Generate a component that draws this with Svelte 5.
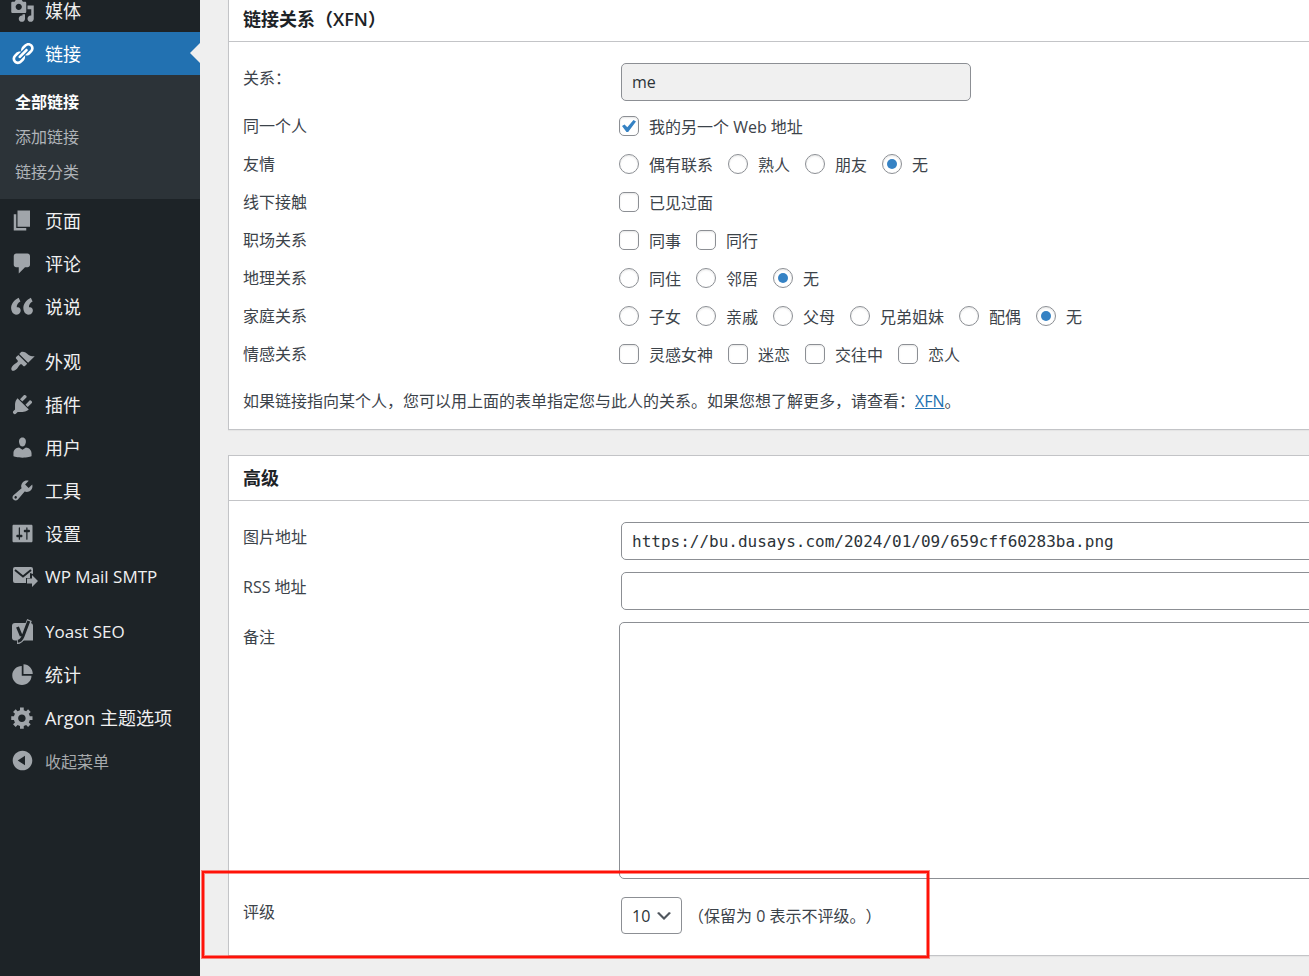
<script lang="ts">
  type MenuItem = { id: string; label: string; icon: string; current?: boolean; gap?: boolean; latin?: boolean };

  const menu: MenuItem[] = [
    { id: 'media', label: '媒体', icon: 'M13 11V4c0-.55-.45-1-1-1h-1.67L9 1H5L3.67 3H2c-.55 0-1 .45-1 1v7c0 .55.45 1 1 1h10c.55 0 1-.45 1-1zM7 4.5c1.38 0 2.5 1.12 2.5 2.5S8.38 9.5 7 9.5 4.5 8.38 4.5 7 5.62 4.5 7 4.5zM14 6h5v10.5c0 1.38-1.12 2.5-2.5 2.5S14 17.88 14 16.5s1.12-2.5 2.5-2.5c.17 0 .34.02.5.05V9h-3V6zm-4 8.05V13h2v3.5c0 1.38-1.12 2.5-2.5 2.5S7 17.88 7 16.5 8.12 14 9.5 14c.17 0 .34.02.5.05z' },
    { id: 'links', label: '链接', current: true, icon: 'M17.74 2.76c1.68 1.69 1.68 4.41 0 6.1l-1.53 1.52c-1.12 1.12-2.7 1.47-4.14 1.09l2.62-2.61.76-.77.76-.76c.84-.84.84-2.2 0-3.04-.84-.85-2.2-.85-3.04 0l-.77.76-3.38 3.38c-.37-1.44-.02-3.02 1.1-4.14l1.52-1.53c1.69-1.68 4.42-1.68 6.1 0zM8.59 13.43l5.34-5.34c.42-.42.42-1.1 0-1.52-.44-.43-1.13-.39-1.53 0l-5.33 5.34c-.42.42-.42 1.1 0 1.52.44.43 1.13.39 1.52 0zm-.76 2.29l4.14-4.15c.38 1.44.03 3.02-1.09 4.14l-1.52 1.53c-1.69 1.68-4.41 1.68-6.1 0-1.68-1.68-1.68-4.42 0-6.1l1.53-1.52c1.12-1.12 2.7-1.47 4.14-1.1l-4.14 4.15c-.85.84-.85 2.2 0 3.05.84.84 2.2.84 3.04 0z' },
    { id: 'pages', label: '页面', icon: 'M6 15V2h10v13H6zm-1 1h8v2H3V5h2v11z' },
    { id: 'comments', label: '评论', icon: 'M5 2h9c1.1 0 2 .9 2 2v7c0 1.1-.9 2-2 2h-2l-5 5v-5H5c-1.1 0-2-.9-2-2V4c0-1.1.9-2 2-2z' },
    { id: 'shuoshuo', label: '说说', icon: 'M8.54 13.22c0-.74-.2-1.38-.61-1.9-.62-.78-1.83-.88-2.53-.72-.29-1.65 1.11-3.75 2.92-4.65L6.93 3C3.2 4.8.5 8.28.96 12.05 1.26 14.43 2.64 16.5 4.99 16.5c.95 0 1.86-.35 2.52-.95s1.03-1.38 1.03-2.33zm9.75 0c0-.74-.2-1.38-.61-1.9-.63-.78-1.83-.88-2.53-.72-.29-1.65 1.11-3.75 2.92-4.65L16.68 3c-3.73 1.8-6.41 5.28-5.95 9.05.29 2.38 1.66 4.45 4.01 4.45.95 0 1.86-.35 2.52-.95s1.03-1.38 1.03-2.33z' },
    { id: 'themes', label: '外观', gap: true, icon: 'M14.48 11.06L7.41 3.99l1.5-1.5c.5-.56 2.3-.47 3.51.32 1.21.8 1.43 1.28 2.91 2.1 1.18.64 2.45 1.26 4.45.85zm-.71.71L6.7 4.7 4.93 6.47c-.39.39-.39 1.02 0 1.41l1.06 1.06c.39.39.39 1.03 0 1.42-.6.6-1.43 1.11-2.21 1.69-.35.26-.7.53-1.01.84C1.43 14.23.4 16.08 1.4 17.07c.99 1 2.84-.03 4.18-1.36.31-.31.58-.66.85-1.02.57-.78 1.08-1.61 1.69-2.21.39-.39 1.02-.39 1.41 0l1.06 1.06c.39.39 1.02.39 1.41 0z' },
    { id: 'plugins', label: '插件', icon: 'M13.11 4.36L9.87 7.6 8 5.73l3.24-3.24c.35-.34 1.05-.2 1.56.32.52.51.66 1.21.31 1.55zm-8 1.77l.91-1.12 9.01 9.01-1.19.84c-.71.71-2.63 1.16-3.82 1.16H6.14L4.9 17.26c-.59.59-1.54.59-2.12 0-.59-.58-.59-1.53 0-2.12l1.24-1.24v-3.88c0-1.13.4-3.19 1.09-3.89zm7.26 3.97l3.24-3.24c.34-.35 1.04-.21 1.55.31.52.51.66 1.21.31 1.55l-3.24 3.25z' },
    { id: 'users', label: '用户', icon: 'M10 9.25c-2.27 0-2.73-3.44-2.73-3.44C7 4.02 7.82 2 9.97 2c2.16 0 2.98 2.02 2.71 3.81 0 0-.41 3.44-2.68 3.44zm0 2.57L12.72 10c2.39 0 4.52 2.33 4.52 4.53v2.49s-3.65 1.13-7.24 1.13c-3.65 0-7.24-1.13-7.24-1.13v-2.49c0-2.25 1.94-4.48 4.47-4.48z' },
    { id: 'tools', label: '工具', icon: 'M16.68 9.77c-1.34 1.34-3.3 1.67-4.95.99l-5.41 6.52c-.99.99-2.59.99-3.58 0s-.99-2.59 0-3.57l6.52-5.42c-.68-1.65-.35-3.61.99-4.95 1.28-1.28 3.12-1.62 4.72-1.06l-2.89 2.89 2.82 2.82 2.86-2.87c.53 1.58.18 3.39-1.08 4.65zM3.81 16.21c.4.39 1.04.39 1.43 0 .4-.4.4-1.04 0-1.43-.39-.4-1.03-.4-1.43 0-.39.39-.39 1.03 0 1.43z' },
    { id: 'settings', label: '设置', icon: 'M18 16V4c0-.55-.45-1-1-1H3c-.55 0-1 .45-1 1v12c0 .55.45 1 1 1h14c.55 0 1-.45 1-1zM8 11h1c.55 0 1 .45 1 1s-.45 1-1 1H8v1.5c0 .28-.22.5-.5.5s-.5-.22-.5-.5V13H6c-.55 0-1-.45-1-1s.45-1 1-1h1V5.5c0-.28.22-.5.5-.5s.5.22.5.5V11zm5-2h-1c-.55 0-1-.45-1-1s.45-1 1-1h1V5.5c0-.28.22-.5.5-.5s.5.22.5.5V7h1c.55 0 1 .45 1 1s-.45 1-1 1h-1v5.5c0 .28-.22.5-.5.5s-.5-.22-.5-.5V9z' },
    { id: 'smtp', label: 'WP Mail SMTP', latin: true, icon: '' },
    { id: 'yoast', label: 'Yoast SEO', latin: true, gap: true, icon: '' },
    { id: 'stats', label: '统计', icon: 'M10.8 9.6V1.8c4.2.1 7.5 3.6 7.4 7.8h-7.4zM9.4 3.2V11h7.8c0 4.2-3.4 7.4-7.6 7.4S1.8 15 1.8 10.8s3.4-7.6 7.6-7.6z' },
    { id: 'argon', label: 'Argon 主题选项', icon: 'M18 12h-2.18c-.17.7-.44 1.35-.81 1.93l1.54 1.54-2.1 2.1-1.54-1.54c-.58.36-1.23.63-1.91.79V19H8v-2.18c-.68-.16-1.33-.43-1.91-.79l-1.54 1.54-2.12-2.12 1.54-1.54c-.36-.58-.63-1.23-.79-1.91H1V9.03h2.17c.16-.7.44-1.35.8-1.94L2.43 5.55l2.1-2.1 1.54 1.54c.58-.37 1.24-.64 1.93-.81V2h3v2.18c.68.16 1.33.43 1.91.79l1.54-1.54 2.12 2.12-1.54 1.54c.36.59.64 1.24.8 1.94H18V12zm-8.5 1.5c1.66 0 3-1.34 3-3s-1.34-3-3-3-3 1.34-3 3 1.34 3 3 3z' },
  ];

  const submenu = ['全部链接', '添加链接', '链接分类'];

  const groups = [
    { name: 'identity', label: '同一个人', type: 'checkbox', options: ['我的另一个 Web 地址'], checked: 0 },
    { name: 'friendship', label: '友情', type: 'radio', options: ['偶有联系', '熟人', '朋友', '无'], checked: 3 },
    { name: 'physical', label: '线下接触', type: 'checkbox', options: ['已见过面'], checked: -1 },
    { name: 'professional', label: '职场关系', type: 'checkbox', options: ['同事', '同行'], checked: -1 },
    { name: 'geographical', label: '地理关系', type: 'radio', options: ['同住', '邻居', '无'], checked: 2 },
    { name: 'family', label: '家庭关系', type: 'radio', options: ['子女', '亲戚', '父母', '兄弟姐妹', '配偶', '无'], checked: 5 },
    { name: 'romantic', label: '情感关系', type: 'checkbox', options: ['灵感女神', '迷恋', '交往中', '恋人'], checked: -1 },
  ];

  let rel = $state('me');
  let image = $state('https://bu.dusays.com/2024/01/09/659cff60283ba.png');
  let rss = $state('');
  let notes = $state('');
  let rating = $state(10);
</script>

<div class="wrap">
  <nav class="side">
    <ul class="menu">
      {#each menu as item (item.id)}
        <li class:gap={item.gap}>
          <a class="item" class:current={item.current} class:latin={item.latin} href="#{item.id}">
            {#if item.id === 'smtp'}
              <svg class="icon wide" viewBox="0 0 28 25" aria-hidden="true">
                <path d="M5 3h16a2 2 0 0 1 2 2v5l-3-1v5h-4v5H5a2 2 0 0 1-2-2V5a2 2 0 0 1 2-2z" />
                <path class="cut" d="M5 6l8 6.500L21 6" />
                <path d="M17 14.500h5V11l6 6-6 6v-3.500h-5z" />
              </svg>
            {:else if item.id === 'yoast'}
              <svg class="icon" viewBox="0 0 25 25" aria-hidden="true">
                <path d="M5 4h15a3 3 0 0 1 3 3v14.500H5a3 3 0 0 1-3-3V7a3 3 0 0 1 3-3z" />
                <path class="edge" d="M19.500 1L13 17.500q-2 5-6 5" />
                <path class="cut heavy" d="M7.500 8l3.800 9M18.800 2L13 17.200q-2 5-5.200 5" />
              </svg>
            {:else}
              <svg class="icon" viewBox="0 0 20 20" aria-hidden="true"><path d={item.icon} /></svg>
            {/if}
            <span>{item.label}</span>
          </a>
          {#if item.current}
            <ul class="submenu">
              {#each submenu as sub, i}
                <li><a class:active={i === 0} href="#links-{i}">{sub}</a></li>
              {/each}
            </ul>
          {/if}
        </li>
      {/each}
      <li>
        <button class="item collapse" type="button">
          <svg class="icon" viewBox="0 0 20 20" aria-hidden="true">
            <path d="M10 2.160c4.330 0 7.840 3.510 7.840 7.840s-3.510 7.840-7.840 7.840S2.160 14.330 2.160 10 5.710 2.160 10 2.160zm2 11.720V6.120L6.180 9.970z" />
          </svg>
          <span>收起菜单</span>
        </button>
      </li>
    </ul>
  </nav>

  <main class="content">
    <section class="box">
      <h2>链接关系（XFN）</h2>
      <div class="inside">
        <table>
          <tbody>
            <tr class="field">
              <th scope="row"><label for="link_rel">关系：</label></th>
              <td><input id="link_rel" class="text short" type="text" bind:value={rel} readonly /></td>
            </tr>
            {#each groups as g (g.name)}
              <tr class="choice">
                <th scope="row">{g.label}</th>
                <td>
                  <div class="options" role="group" aria-label={g.label}>
                    {#each g.options as opt, i}
                      <label>
                        <input type={g.type} name={g.name} value={opt} checked={i === g.checked} />
                        <span>{opt}</span>
                      </label>
                    {/each}
                  </div>
                </td>
              </tr>
            {/each}
          </tbody>
        </table>
        <p>如果链接指向某个人，您可以用上面的表单指定您与此人的关系。如果您想了解更多，请查看：<a href="#xfn">XFN</a>。</p>
      </div>
    </section>

    <section class="box">
      <h2>高级</h2>
      <div class="inside">
        <table>
          <tbody>
            <tr class="field">
              <th scope="row"><label for="link_image">图片地址</label></th>
              <td><input id="link_image" class="text code" type="text" bind:value={image} /></td>
            </tr>
            <tr class="field">
              <th scope="row"><label for="link_rss">RSS 地址</label></th>
              <td><input id="link_rss" class="text code" type="text" bind:value={rss} /></td>
            </tr>
            <tr class="field">
              <th scope="row"><label for="link_notes">备注</label></th>
              <td><textarea id="link_notes" bind:value={notes}></textarea></td>
            </tr>
            <tr class="field rating">
              <th scope="row"><label for="link_rating">评级</label></th>
              <td>
                <div class="rate">
                  <span class="select">
                    <select id="link_rating" bind:value={rating}>
                      {#each Array(11) as _, n}
                        <option value={n}>{n}</option>
                      {/each}
                    </select>
                    <svg viewBox="0 0 20 20" aria-hidden="true"><path d="M5 6l5 5 5-5 2 1-7 7-7-7 2-1z" /></svg>
                  </span>
                  <span>（保留为 0 表示不评级。）</span>
                </div>
              </td>
            </tr>
          </tbody>
        </table>
      </div>
      <div class="marker"></div>
    </section>
  </main>
</div>

<style>
  :global(body) {
    background: #efefef;
  }
  .wrap {
    display: flex;
    min-height: 100vh;
    overflow: hidden;
    background: #efefef;
    color: #3c434a;
    font-family: 'Open Sans', 'Noto Sans CJK SC', sans-serif;
    font-size: 16px;
    line-height: 24px;
    text-spacing-trim: space-all;
  }
  .wrap * {
    box-sizing: border-box;
  }

  /* sidebar */
  .side {
    flex: 0 0 200px;
    background: #1d2327;
  }
  ul {
    list-style: none;
    margin: 0;
    padding: 0;
  }
  .menu {
    margin-top: -11px;
  }
  .gap {
    margin-top: 12px;
  }
  .item {
    position: relative;
    display: flex;
    align-items: center;
    gap: 10px;
    width: 100%;
    height: 43px;
    padding: 0 0 0 10px;
    border: 0;
    background: none;
    color: #f0f0f1;
    font-family: inherit;
    font-size: 18px;
    text-decoration: none;
    white-space: nowrap;
  }
  .latin {
    font-size: 17px;
  }
  .icon {
    flex: none;
    width: 25px;
    height: 25px;
    fill: #a0a5aa;
  }
  .icon.wide {
    width: 28px;
    margin-right: -3px;
  }
  .cut {
    fill: none;
    stroke: #1d2327;
    stroke-width: 2;
  }
  .heavy {
    stroke-width: 3;
  }
  .edge {
    fill: none;
    stroke: #a0a5aa;
    stroke-width: 5;
  }
  .current {
    background: #2271b1;
    color: #fff;
  }
  .current .icon {
    fill: #fff;
  }
  .current::after {
    content: '';
    position: absolute;
    right: 0;
    top: 11px;
    border: 10px solid transparent;
    border-left-width: 0;
    border-right-color: #efefef;
  }
  .submenu {
    padding: 10px 0 9px;
    background: #2c3338;
  }
  .submenu a {
    display: block;
    padding: 0 15px;
    line-height: 35px;
    color: #b0b4b8;
    text-decoration: none;
  }
  .submenu .active {
    color: #fff;
    font-weight: 700;
  }
  .collapse {
    color: #a7aaad;
    font-size: 16px;
    cursor: pointer;
  }

  /* the form runs past the right edge of the window */
  .content {
    flex: 1;
    min-width: 0;
    margin: -4px -40px 0 0;
    padding: 0 20px 20px 28px;
  }
  .box {
    position: relative;
    margin-bottom: 25px;
    border: 1px solid #c3c4c7;
    background: #fff;
    box-shadow: 0 1px 1px rgba(0, 0, 0, 0.04);
  }
  .box:last-child {
    margin-bottom: 0;
  }
  h2 {
    margin: 0;
    padding: 10px 14px;
    border-bottom: 1px solid #c3c4c7;
    color: #1d2327;
    font-size: 18px;
    font-weight: 600;
    line-height: 24px;
  }
  .inside {
    padding: 15px 14px 16px;
  }
  table {
    width: 100%;
    border-collapse: collapse;
    table-layout: fixed;
  }
  th {
    width: 376px;
    padding: 0;
    font-weight: 400;
    text-align: left;
    vertical-align: top;
  }
  td {
    padding: 0;
    vertical-align: top;
  }
  .field th {
    padding-top: 9px;
  }
  .field td {
    padding: 6px 0;
  }
  .choice th,
  .choice td {
    height: 38px;
    vertical-align: middle;
  }
  .text {
    display: block;
    width: calc(100% - 2px);
    height: 38px;
    margin-left: 2px;
    padding: 0 10px;
    border: 1px solid #8c8f94;
    border-radius: 5px;
    background: #fff;
    color: #2c3338;
    font-family: inherit;
    font-size: 16px;
  }
  .short {
    width: 350px;
    background: #f0f0f0;
  }
  .code {
    font-family: 'DejaVu Sans Mono', monospace;
  }
  textarea {
    display: block;
    width: 100%;
    height: 257px;
    padding: 6px 10px;
    border: 1px solid #8c8f94;
    border-radius: 5px;
    background: #fff;
    color: #2c3338;
    font-family: inherit;
    font-size: 16px;
    resize: none;
  }
  .options {
    display: flex;
    gap: 15px;
  }
  .options label {
    display: flex;
    align-items: center;
    gap: 10px;
    white-space: nowrap;
  }
  .options span {
    padding-top: 2px;
  }
  .options input {
    appearance: none;
    display: grid;
    place-items: center;
    flex: none;
    width: 20px;
    height: 20px;
    margin: 0;
    border: 1px solid #8c8f94;
    border-radius: 5px;
    background: #fff;
    box-shadow: inset 0 1px 2px rgba(0, 0, 0, 0.1);
  }
  .options input[type='radio'] {
    border-radius: 50%;
  }
  .options input:checked::before {
    content: '';
    width: 14px;
    height: 12px;
    background: #3582c4;
    clip-path: polygon(0 50%, 18% 38%, 38% 60%, 82% 0, 100% 12%, 44% 100%, 32% 100%);
  }
  .options input[type='radio']:checked::before {
    width: 10px;
    height: 10px;
    border-radius: 50%;
    clip-path: none;
  }
  p {
    margin: 16px 0 0;
  }
  p a {
    color: #2271b1;
  }
  .rating th {
    padding-top: 15px;
  }
  .rating td {
    padding: 12px 0 5px;
  }
  .rate {
    display: flex;
    align-items: center;
    gap: 6px;
    margin-left: 2px;
  }
  .select {
    position: relative;
  }
  select {
    appearance: none;
    display: block;
    width: 61px;
    height: 37px;
    padding: 0 10px;
    border: 1px solid #8c8f94;
    border-radius: 4px;
    background: #fff;
    color: #2c3338;
    font-family: inherit;
    font-size: 16px;
  }
  .select svg {
    position: absolute;
    right: 8px;
    top: 9px;
    width: 20px;
    height: 20px;
    fill: #50575e;
    pointer-events: none;
  }
  .marker {
    position: absolute;
    left: -27px;
    bottom: -3px;
    width: 727px;
    height: 87px;
    border: 2px solid #ff1208;
    box-shadow:
      0 0 0 1px rgba(255, 18, 8, 0.5),
      inset 0 0 0 1px rgba(255, 18, 8, 0.5);
    pointer-events: none;
  }
</style>
